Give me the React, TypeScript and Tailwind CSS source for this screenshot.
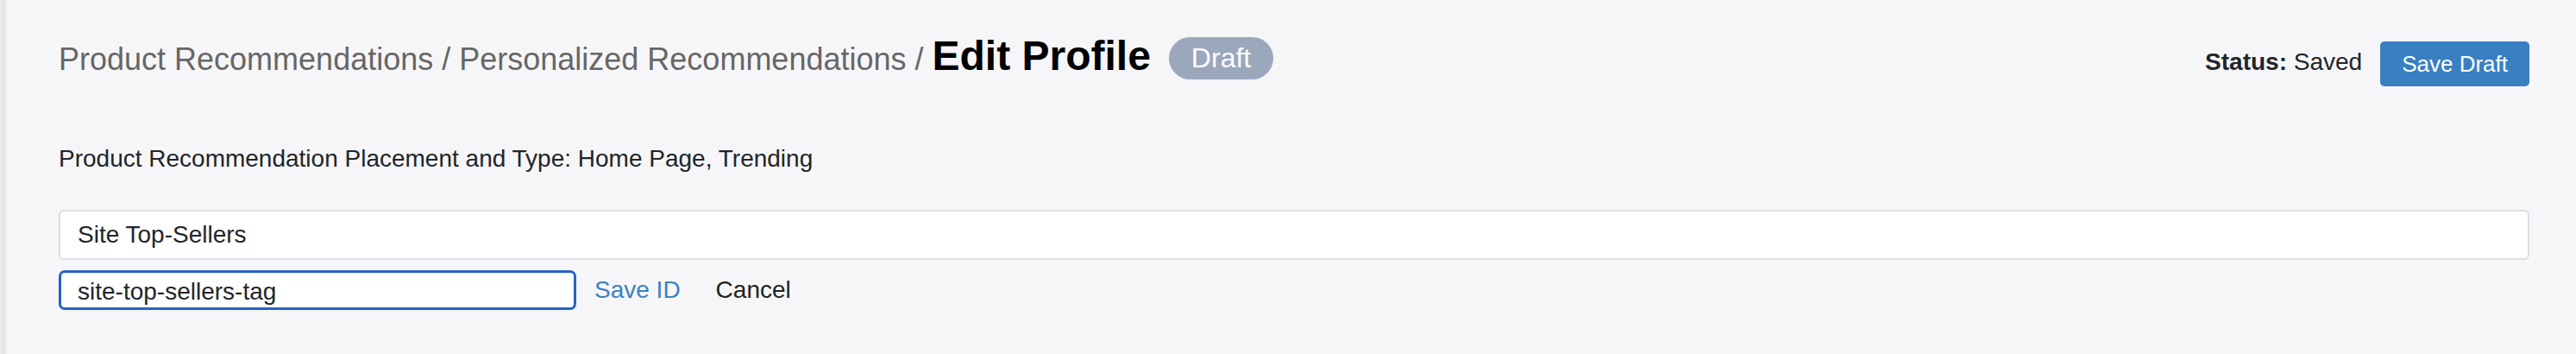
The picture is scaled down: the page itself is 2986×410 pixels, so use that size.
export default function App() {
  return (
    <div className="min-h-screen w-full flex bg-[#f6f6f8] font-['Liberation_Sans',Arial,sans-serif]">
      {/* sidebar edge shadow */}
      <div className="w-[8px] shrink-0 bg-linear-to-r from-[#ececee] via-[#e2e2e4] to-[#efeff1]" />

      <div className="flex-1 pl-[60px] pr-[54px]">
        {/* Header */}
        <div className="flex justify-between items-start pt-[36px]">
          <div className="flex items-center gap-[21px]">
            <div className="flex items-baseline">
              <span className="text-[36px] leading-[58px] text-[#666666]">
                Product Recommendations / Personalized Recommendations /
              </span>
              <span className="ml-[10px] text-[48px] leading-[58px] font-bold text-black">
                Edit Profile
              </span>
            </div>
            <span className="h-[49px] px-[26px] rounded-full bg-[#9ba8bc] text-white text-[32px] leading-[49px]">
              Draft
            </span>
          </div>

          <div className="flex items-center gap-[21px] mt-[12px]">
            <span className="text-[28px] leading-[30px] text-[#212529] mb-[4px]">
              <span className="font-bold">Status:</span> Saved
            </span>
            <button className="h-[52px] px-[25px] rounded-[5px] bg-[#3880c1] text-white text-[26px]">
              Save Draft
            </button>
          </div>
        </div>

        {/* Placement */}
        <p className="mt-[64px] text-[28px] leading-[40px] text-[#212529]">
          Product Recommendation Placement and Type: Home Page, Trending
        </p>

        {/* Name */}
        <input
          readOnly
          defaultValue="Site Top-Sellers"
          className="mt-[39px] block w-full h-[58px] pl-[20px] border-2 border-[#dcdfe4] rounded-[6px] bg-white text-[28px] text-[#212529] outline-none"
        />

        {/* ID editor */}
        <div className="mt-[12px] flex items-center">
          <input
            readOnly
            defaultValue="site-top-sellers-tag"
            className="w-[600px] h-[46px] pl-[19px] pt-[3px] border-[3px] border-[#2762c6] rounded-[7px] bg-white text-[28px] text-[#212529] outline-none"
          />
          <button className="ml-[21px] text-[28px] text-[#3a82c3]">Save ID</button>
          <button className="ml-[41px] text-[28px] text-[#222222]">Cancel</button>
        </div>
      </div>
    </div>
  );
}
